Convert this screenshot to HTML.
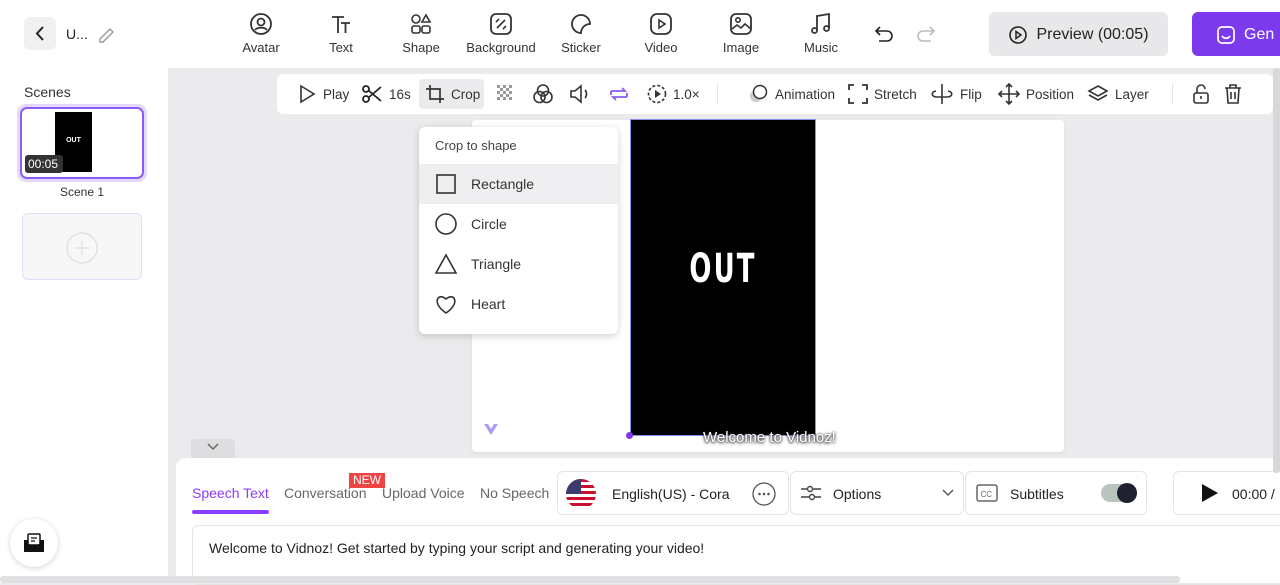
<!DOCTYPE html>
<html><head><meta charset="utf-8">
<style>
*{box-sizing:border-box;margin:0;padding:0}
body{width:1280px;height:583px;overflow:hidden;background:#ebebed;font-family:"Liberation Sans",sans-serif;color:#222;position:relative;font-size:14px}
.abs{position:absolute}
svg{display:block}
.top{left:0;top:0;width:1280px;height:68px;background:#fff}
.tb{position:absolute;top:12px;text-align:center;font-size:13px;color:#333;width:80px}
.tb svg{margin:0 auto 4px}
.tool{position:absolute;top:0;height:40px;display:flex;align-items:center;font-size:13.5px;color:#333;gap:6px}
.menu-item{height:40px;display:flex;align-items:center;padding-left:16px;gap:14px;font-size:14px;color:#333}
</style></head><body>

<div class="abs top"></div>
<div class="abs" style="left:24px;top:17px;width:32px;height:33px;background:#f0f0f2;border-radius:6px"><svg width="32" height="33"><path d="M19 10l-6 6.5 6 6.5" fill="none" stroke="#222" stroke-width="2"/></svg></div>
<div class="abs" style="left:66px;top:26px;font-size:14px">U...</div>
<svg class="abs" style="left:97px;top:24px" width="20" height="20"><path d="M3 15l10-10 3 3-10 10H3z M3 18h4" fill="none" stroke="#999" stroke-width="1.4"/></svg>

<div class="tb" style="left:221px"><svg width="24" height="24"><circle cx="12" cy="12" r="10" fill="none" stroke="#333" stroke-width="1.8"/><circle cx="12" cy="10" r="3.5" fill="none" stroke="#333" stroke-width="1.8"/><path d="M6 18c2-3 10-3 12 0" fill="none" stroke="#333" stroke-width="1.8"/></svg>Avatar</div>
<div class="tb" style="left:301px"><svg width="24" height="24"><path d="M3 5h12M9 5v16M12 11h9M16.5 11v10" fill="none" stroke="#333" stroke-width="1.8"/></svg>Text</div>
<div class="tb" style="left:381px"><svg width="24" height="24"><circle cx="7" cy="7" r="4" fill="none" stroke="#333" stroke-width="1.6"/><path d="M17 3l4 7h-8z" fill="none" stroke="#333" stroke-width="1.6"/><rect x="3" y="14" width="8" height="7" rx="2" fill="none" stroke="#333" stroke-width="1.6"/><rect x="13" y="14" width="8" height="7" rx="2" fill="none" stroke="#333" stroke-width="1.6"/></svg>Shape</div>
<div class="tb" style="left:461px"><svg width="24" height="24"><rect x="2" y="2" width="20" height="20" rx="5" fill="none" stroke="#333" stroke-width="1.8"/><path d="M8 16l8-8M7 10l3-3M14 17l3-3" stroke="#333" stroke-width="1.6"/></svg>Background</div>
<div class="tb" style="left:541px"><svg width="24" height="24"><path d="M21 12a9 9 0 1 0-9 9c0-5 4-9 9-9z" fill="none" stroke="#333" stroke-width="1.8"/></svg>Sticker</div>
<div class="tb" style="left:621px"><svg width="24" height="24"><rect x="2" y="2" width="20" height="20" rx="6" fill="none" stroke="#333" stroke-width="1.8"/><path d="M10 8l6 4-6 4z" fill="none" stroke="#333" stroke-width="1.6"/></svg>Video</div>
<div class="tb" style="left:701px"><svg width="24" height="24"><rect x="2" y="2" width="20" height="20" rx="5" fill="none" stroke="#333" stroke-width="1.8"/><circle cx="9" cy="8" r="2.2" fill="none" stroke="#333" stroke-width="1.6"/><path d="M3 17l5-4 4 3 4-4 6 5" fill="none" stroke="#333" stroke-width="1.6"/></svg>Image</div>
<div class="tb" style="left:781px"><svg width="24" height="24"><path d="M8 18V4l12-2v14" fill="none" stroke="#333" stroke-width="1.8"/><circle cx="5.5" cy="18.5" r="2.5" fill="none" stroke="#333" stroke-width="1.8"/><circle cx="17.5" cy="16.5" r="2.5" fill="none" stroke="#333" stroke-width="1.8"/></svg>Music</div>
<svg class="abs" style="left:874px;top:24px" width="22" height="20"><path d="M6 3L2 7l4 4M2 7h11a5 5 0 0 1 0 10H5" fill="none" stroke="#222" stroke-width="1.6"/></svg>
<svg class="abs" style="left:914px;top:24px" width="22" height="20"><path d="M16 3l4 4-4 4M20 7H9a5 5 0 0 0 0 10h8" fill="none" stroke="#bbb" stroke-width="1.6"/></svg>
<div class="abs" style="left:989px;top:12px;width:179px;height:44px;background:#e8e8ea;border-radius:6px;display:flex;align-items:center;justify-content:center;gap:8px;font-size:16px;color:#222;padding-top:2px"><svg width="20" height="20"><circle cx="10" cy="10" r="8" fill="none" stroke="#222" stroke-width="1.6"/><path d="M8 6.5l5 3.5-5 3.5z" fill="none" stroke="#222" stroke-width="1.5"/></svg>Preview (00:05)</div>
<div class="abs" style="left:1192px;top:12px;width:100px;height:44px;background:#7c3aed;border-radius:6px;color:#fff;font-size:16px;display:flex;align-items:center;padding-left:24px;gap:8px;padding-top:2px"><svg width="20" height="20"><rect x="2" y="2" width="16" height="16" rx="4" fill="none" stroke="#fff" stroke-width="1.7"/><path d="M6 11c2 3 6 3 8 0" fill="none" stroke="#fff" stroke-width="1.7"/></svg>Gen</div>

<!-- left panel -->
<div class="abs" style="left:0;top:68px;width:168px;height:515px;background:#fff"></div>
<div class="abs" style="left:24px;top:84px;font-size:14px;color:#333">Scenes</div>
<div class="abs" style="left:17px;top:104px;width:130px;height:78px;border-radius:9px;background:#e4d9fd"></div>
<div class="abs" style="left:20px;top:107px;width:124px;height:72px;border:2px solid #8b5cf6;border-radius:7px;background:#fff;overflow:hidden">
 <div class="abs" style="left:33px;top:3px;width:37px;height:60px;background:#000;color:#fff;font-size:7px;font-weight:bold;text-align:center;padding-top:25px">OUT</div>
 <div class="abs" style="left:3px;top:46px;width:38px;height:18px;background:#333;border-radius:3px;color:#fff;font-size:12px;padding:2px 0 0 3px">00:05</div>
</div>
<div class="abs" style="left:0;top:185px;width:164px;text-align:center;font-size:12px;color:#333">Scene 1</div>
<div class="abs" style="left:22px;top:213px;width:120px;height:67px;border:1.5px solid #e4dcfa;border-radius:6px;background:#f7f7f8"><svg style="margin:18px auto 0" width="32" height="32"><circle cx="16" cy="16" r="15" fill="none" stroke="#ddd" stroke-width="1.2"/><path d="M16 9v14M9 16h14" stroke="#ddd" stroke-width="1.2"/></svg></div>
<div class="abs" style="left:10px;top:519px;width:48px;height:48px;border-radius:50%;background:#fff;box-shadow:0 1px 6px rgba(0,0,0,.18)"><svg style="margin:13px auto 0" width="22" height="22"><path d="M1 8h20v12H1z" fill="#111"/><rect x="5" y="2" width="12" height="11" rx="1" fill="#fff" stroke="#111" stroke-width="1.5"/><path d="M8 6h6M8 9h4" stroke="#111" stroke-width="1.3"/><path d="M1 9l10 6 10-6v2l-10 6-10-6z" fill="#111"/></svg></div>

<!-- toolbar -->
<div class="abs" style="left:277px;top:74px;width:996px;height:40px;background:#fff;border-radius:6px">
 <div class="tool" style="left:20px"><svg width="20" height="20"><path d="M4 2l13 8-13 8z" fill="none" stroke="#333" stroke-width="1.6"/></svg>Play</div>
 <div class="tool" style="left:84px"><svg width="22" height="20"><circle cx="5" cy="5" r="3" fill="none" stroke="#222" stroke-width="1.8"/><circle cx="5" cy="15" r="3" fill="none" stroke="#222" stroke-width="1.8"/><path d="M7 6l13 11M7 14L20 3" stroke="#222" stroke-width="1.8"/></svg>16s</div>
 <div class="abs" style="left:142px;top:5px;width:65px;height:30px;background:#ebebed;border-radius:4px"></div>
 <div class="tool" style="left:148px"><svg width="20" height="20"><path d="M5 1v14h14M1 5h14v14" fill="none" stroke="#333" stroke-width="1.7"/></svg>Crop</div>
 <svg class="abs" style="left:220px;top:11px" width="18" height="18"><g fill="#999"><rect x="0" y="0" width="3" height="3"/><rect x="6" y="0" width="3" height="3"/><rect x="12" y="0" width="3" height="3"/><rect x="3" y="3" width="3" height="3"/><rect x="9" y="3" width="3" height="3"/><rect x="0" y="6" width="3" height="3"/><rect x="6" y="6" width="3" height="3"/><rect x="12" y="6" width="3" height="3"/><rect x="3" y="9" width="3" height="3"/><rect x="9" y="9" width="3" height="3"/><rect x="0" y="12" width="3" height="3"/><rect x="6" y="12" width="3" height="3"/><rect x="12" y="12" width="3" height="3"/></g></svg>
 <svg class="abs" style="left:255px;top:9px" width="22" height="22"><circle cx="11" cy="7.5" r="5.5" fill="none" stroke="#333" stroke-width="1.6"/><circle cx="7.5" cy="14" r="5.5" fill="none" stroke="#333" stroke-width="1.6"/><circle cx="14.5" cy="14" r="5.5" fill="none" stroke="#333" stroke-width="1.6"/></svg>
 <svg class="abs" style="left:292px;top:9px" width="22" height="22"><path d="M2 8h4l6-5v16l-6-5H2z M16 7c2 2 2 6 0 8" fill="none" stroke="#333" stroke-width="1.6"/></svg>
 <svg class="abs" style="left:331px;top:9px" width="22" height="22"><path d="M3 8h14l-3-3M19 14H5l3 3M3 8v4M19 14v-4" fill="none" stroke="#8b5cf6" stroke-width="1.8"/></svg>
 <div class="tool" style="left:370px"><svg width="20" height="20"><circle cx="10" cy="10" r="8.5" fill="none" stroke="#333" stroke-width="1.6" stroke-dasharray="3 2"/><path d="M8 6l6 4-6 4z" fill="#333"/></svg>1.0×</div>
 <div class="abs" style="left:440px;top:9px;width:1px;height:22px;background:#e5e5e5"></div>
 <div class="tool" style="left:470px"><svg width="22" height="20"><circle cx="9" cy="12" r="6" fill="#ccc"/><circle cx="13" cy="8" r="6.5" fill="#fff" stroke="#333" stroke-width="1.5"/></svg>Animation</div>
 <div class="tool" style="left:571px"><svg width="20" height="20"><path d="M1 6V1h5M14 1h5v5M19 14v5h-5M6 19H1v-5" fill="none" stroke="#333" stroke-width="1.8"/></svg>Stretch</div>
 <div class="tool" style="left:653px"><svg width="24" height="22"><path d="M12 1v20M6 8c-5 1-5 5 0 6h12c5-1 5-5 0-6" fill="none" stroke="#333" stroke-width="1.6"/></svg>Flip</div>
 <div class="tool" style="left:721px"><svg width="22" height="22"><path d="M11 1v20M1 11h20M8 4l3-3 3 3M8 18l3 3 3-3M4 8l-3 3 3 3M18 8l3 3-3 3" fill="none" stroke="#333" stroke-width="1.6"/></svg>Position</div>
 <div class="tool" style="left:810px"><svg width="22" height="20"><path d="M11 2l9 5-9 5-9-5z M2 11l9 5 9-5" fill="none" stroke="#333" stroke-width="1.6"/></svg>Layer</div>
 <div class="abs" style="left:895px;top:9px;width:1px;height:22px;background:#e5e5e5"></div>
 <svg class="abs" style="left:914px;top:9px" width="20" height="22"><rect x="3" y="10" width="14" height="10" rx="2" fill="none" stroke="#333" stroke-width="1.6"/><path d="M6 10V6a4 4 0 0 1 8 0" fill="none" stroke="#333" stroke-width="1.6"/><path d="M10 13v3" stroke="#333" stroke-width="1.6"/></svg>
 <svg class="abs" style="left:946px;top:9px" width="20" height="22"><path d="M2 5h16M7 5V2h6v3M4 5l1 15h10l1-15M8 9v7M12 9v7" fill="none" stroke="#333" stroke-width="1.6"/></svg>
</div>

<!-- canvas -->
<div class="abs" style="left:472px;top:120px;width:592px;height:332px;background:#fff;border-radius:4px;box-shadow:0 1px 3px rgba(0,0,0,.08)"></div>
<div class="abs" style="left:630px;top:119px;width:186px;height:317px;background:#000;border:1px solid #8a8cf0"></div>
<div class="abs" style="left:630px;top:246px;width:186px;text-align:center;color:#fff;font-family:'DejaVu Sans Condensed','Liberation Sans',sans-serif;font-weight:bold;font-size:40px;letter-spacing:3px;transform:scaleX(0.72)">OUT</div>
<div class="abs" style="left:626px;top:432px;width:7px;height:7px;border-radius:50%;background:#7c3aed"></div>
<div class="abs" style="left:703px;top:429px;color:#fff;font-size:15px;text-shadow:0 1px 3px #000,0 0 2px #555">Welcome to Vidnoz!</div>
<svg class="abs" style="left:483px;top:421px" width="16" height="16"><path d="M1 3l7 11 7-11h-4l-3 5-3-5z" fill="#a99cf5"/></svg>

<!-- crop menu -->
<div class="abs" style="left:419px;top:127px;width:199px;height:207px;background:#fff;border-radius:6px;box-shadow:0 2px 8px rgba(0,0,0,.18)">
 <div style="height:37px;padding:11px 0 0 16px;font-size:13px;color:#444">Crop to shape</div>
 <div class="menu-item" style="background:#efeff1"><svg width="22" height="22"><rect x="2" y="2" width="18" height="18" fill="none" stroke="#333" stroke-width="1.6"/></svg>Rectangle</div>
 <div class="menu-item"><svg width="22" height="22"><circle cx="11" cy="11" r="10" fill="none" stroke="#333" stroke-width="1.6"/></svg>Circle</div>
 <div class="menu-item"><svg width="22" height="22"><path d="M11 2l10 18H1z" fill="none" stroke="#333" stroke-width="1.6"/></svg>Triangle</div>
 <div class="menu-item"><svg width="22" height="22"><path d="M11 20C-4 10 3-1 11 6c8-7 15 4 0 14z" fill="none" stroke="#333" stroke-width="1.6"/></svg>Heart</div>
</div>

<!-- collapse -->
<div class="abs" style="left:191px;top:439px;width:44px;height:20px;background:#dedee0;border-radius:4px 4px 0 0"><svg style="margin:3px auto 0" width="14" height="10"><path d="M2 2l5 5 5-5" fill="none" stroke="#666" stroke-width="1.5"/></svg></div>

<!-- bottom panel -->
<div class="abs" style="left:176px;top:458px;width:1110px;height:125px;background:#fff;border-radius:10px 0 0 0"></div>
<div class="abs" style="left:192px;top:485px;font-size:14px;color:#8b3dff">Speech Text</div>
<div class="abs" style="left:192px;top:510px;width:77px;height:4px;background:#8b3dff;border-radius:2px"></div>
<div class="abs" style="left:284px;top:485px;font-size:14px;color:#666">Conversation</div>
<div class="abs" style="left:349px;top:473px;width:36px;height:15px;background:#ef4444;color:#fff;font-size:12px;text-align:center;line-height:15px">NEW</div>
<div class="abs" style="left:382px;top:485px;font-size:14px;color:#666">Upload Voice</div>
<div class="abs" style="left:480px;top:485px;font-size:14px;color:#666">No Speech</div>
<div class="abs" style="left:557px;top:471px;width:232px;height:44px;border:1px solid #e3e3e3;border-radius:6px"></div>
<svg class="abs" style="left:565px;top:478px" width="32" height="32"><defs><clipPath id="c"><circle cx="16" cy="16" r="15"/></clipPath></defs><g clip-path="url(#c)"><rect width="32" height="32" fill="#fff"/><g fill="#c8102e"><rect y="1" width="32" height="3"/><rect y="7" width="32" height="3"/><rect y="13" width="32" height="3"/><rect y="19" width="32" height="3"/><rect y="25" width="32" height="3"/></g><rect width="16" height="16" fill="#3c3b6e"/></g></svg>
<div class="abs" style="left:612px;top:486px;font-size:14px;color:#222">English(US) - Cora</div>
<svg class="abs" style="left:752px;top:482px" width="24" height="24"><circle cx="12" cy="12" r="11" fill="none" stroke="#555" stroke-width="1.3"/><circle cx="7.5" cy="12" r="1.3" fill="#555"/><circle cx="12" cy="12" r="1.3" fill="#555"/><circle cx="16.5" cy="12" r="1.3" fill="#555"/></svg>
<div class="abs" style="left:790px;top:471px;width:174px;height:44px;border:1px solid #e3e3e3;border-radius:6px"></div>
<svg class="abs" style="left:800px;top:483px" width="22" height="20"><path d="M1 6h6M13 6h8M1 14h8M15 14h6" stroke="#444" stroke-width="1.5"/><circle cx="10" cy="6" r="2.5" fill="none" stroke="#444" stroke-width="1.4"/><circle cx="12" cy="14" r="2.5" fill="none" stroke="#444" stroke-width="1.4"/></svg>
<div class="abs" style="left:833px;top:486px;font-size:14px;color:#222">Options</div>
<svg class="abs" style="left:941px;top:488px" width="14" height="10"><path d="M2 2l5 5 5-5" fill="none" stroke="#555" stroke-width="1.4"/></svg>
<div class="abs" style="left:965px;top:471px;width:182px;height:44px;border:1px solid #e3e3e3;border-radius:6px"></div>
<svg class="abs" style="left:976px;top:483px" width="22" height="20"><rect x="1" y="2" width="20" height="16" rx="2" fill="none" stroke="#666" stroke-width="1.5"/><text x="4.5" y="14" font-size="8" font-family="Liberation Sans" fill="#666">CC</text></svg>
<div class="abs" style="left:1010px;top:486px;font-size:14px;color:#222">Subtitles</div>
<div class="abs" style="left:1101px;top:484px;width:36px;height:18px;border-radius:9px;background:#b9c4bd"></div>
<div class="abs" style="left:1117px;top:483px;width:20px;height:20px;border-radius:50%;background:#1f2030"></div>
<div class="abs" style="left:1173px;top:471px;width:120px;height:44px;border:1px solid #e3e3e3;border-radius:6px"></div>
<svg class="abs" style="left:1200px;top:483px" width="20" height="20"><path d="M2 1l16 9-16 9z" fill="#111"/></svg>
<div class="abs" style="left:1232px;top:486px;font-size:14px;color:#222">00:00 /</div>
<div class="abs" style="left:192px;top:525px;width:1100px;height:60px;border:1px solid #e3e3e3;border-radius:6px"></div>
<div class="abs" style="left:209px;top:540px;font-size:14px;color:#222">Welcome to Vidnoz! Get started by typing your script and generating your video!</div>
<div class="abs" style="left:1273px;top:68px;width:7px;height:405px;background:#d8d8da;border-radius:3px"></div>
<div class="abs" style="left:0;top:576px;width:1180px;height:7px;background:#e0e0e2;border-radius:3px"></div>
</body></html>
